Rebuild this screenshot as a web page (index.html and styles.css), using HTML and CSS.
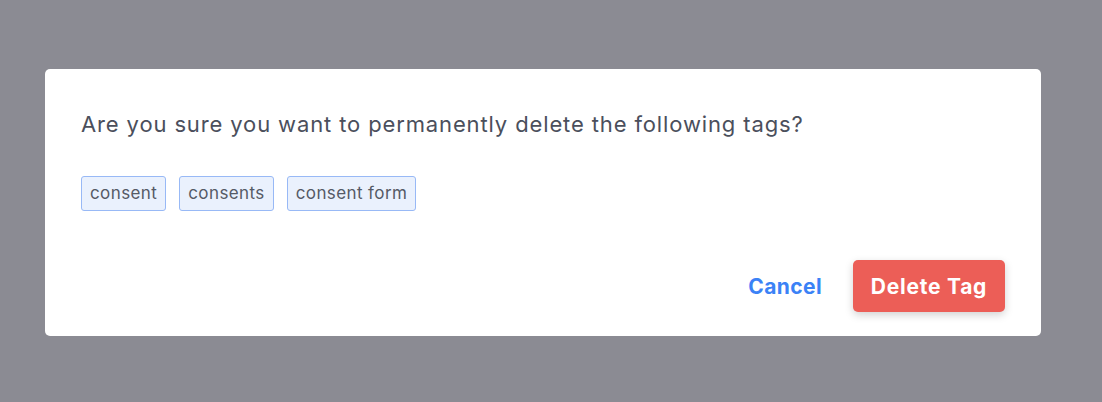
FILE: index.html
```html
<!DOCTYPE html>
<html>
<head>
<meta charset="utf-8">
<link rel="stylesheet" href="styles.css">
</head>
<body>
<div class="overlay">
  <div class="modal">
    <p class="question">Are you sure you want to permanently delete the following tags?</p>
    <div class="tags">
      <span class="tag">consent</span>
      <span class="tag">consents</span>
      <span class="tag">consent form</span>
    </div>
    <div class="actions">
      <button class="btn-cancel">Cancel</button>
      <button class="btn-delete">Delete Tag</button>
    </div>
  </div>
</div>
</body>
</html>
```
FILE: styles.css
```css
html, body {
  margin: 0;
  padding: 0;
  width: 1102px;
  height: 402px;
  background: #8b8b93;
  font-family: Inter, "Noto Sans", sans-serif;
  overflow: hidden;
}
.overlay {
  padding: 69px 61px 0 45px;
}
.modal {
  width: 996px;
  height: 267px;
  box-sizing: border-box;
  background: #ffffff;
  border-radius: 5px;
  padding: 40px 36px 24px 36px;
  display: flex;
  flex-direction: column;
}
.question {
  margin: 0;
  font-size: 22px;
  line-height: 30px;
  letter-spacing: 0.87px;
  color: #4b4f5c;
}
.tags {
  display: flex;
  gap: 13px;
  margin-top: 37px;
}
.tag {
  display: inline-block;
  box-sizing: border-box;
  height: 35px;
  line-height: 33px;
  padding: 0 8px;
  border: 1px solid #98b9f6;
  border-radius: 3px;
  background: #eaf1fd;
  color: #555a66;
  font-size: 17px;
  letter-spacing: 0.4px;
}
.actions {
  margin-top: auto;
  display: flex;
  justify-content: flex-end;
  align-items: center;
  gap: 31px;
}
.btn-cancel {
  background: none;
  border: none;
  padding: 0;
  font-family: inherit;
  font-weight: 700;
  font-size: 21px;
  letter-spacing: 0.4px;
  color: #3b82f6;
}
.btn-delete {
  width: 152px;
  height: 52px;
  border: none;
  border-radius: 5px;
  background: #ec5e57;
  color: #ffffff;
  font-family: inherit;
  font-weight: 700;
  font-size: 21px;
  letter-spacing: 0.75px;
  box-shadow: 0 3px 8px rgba(0,0,0,0.18);
}
```
